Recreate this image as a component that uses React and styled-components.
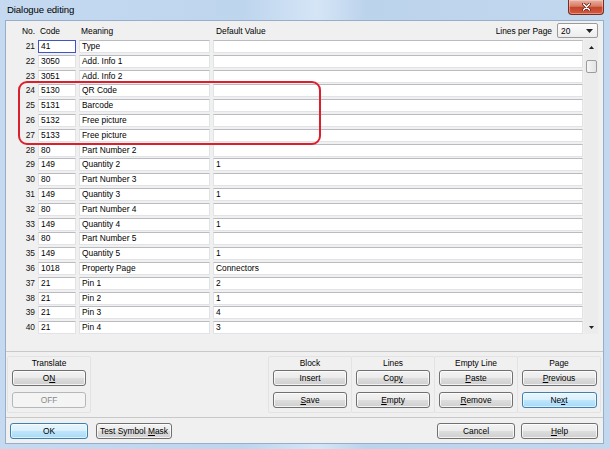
import React from "react";
import styled, { createGlobalStyle, css } from "styled-components";

const Global = createGlobalStyle`
  html, body { margin: 0; padding: 0; }
  body {
    width: 610px; height: 449px; overflow: hidden;
    background: #bcd4ee;
    font-family: "Liberation Sans", Arial, sans-serif;
  }
  * { box-sizing: border-box; }
`;

const Window = styled.div`
  width: 610px;
  height: 449px;
  display: flex;
  flex-direction: column;
  padding: 0 6px 5px 5px;
  background: linear-gradient(90deg, #c5daf1 0%, #bed5ee 40%, #d5e5f6 52%, #bcd3ec 60%, #c2d8ef 100%);
`;

const TitleBar = styled.div`
  height: 20px;
  display: flex;
  align-items: flex-start;
`;

const Title = styled.div`
  padding: 4px 0 0 2px;
  font-size: 9.6px;
  color: #000;
  letter-spacing: -0.1px;
`;

const CloseButton = styled.div`
  margin-left: auto;
  width: 36px;
  height: 15px;
  border: 1px solid #7a2a1e;
  border-top: none;
  border-radius: 0 0 4px 4px;
  background: linear-gradient(180deg, #eab1a3 0%, #d77a64 45%, #c5452b 52%, #d2593f 100%);
  display: flex;
  align-items: center;
  justify-content: center;
  box-shadow: inset 0 0 0 1px rgba(255, 220, 210, 0.45);
`;

const Client = styled.div`
  flex: 1;
  display: flex;
  flex-direction: column;
  background: #f0f0f0;
  border: 1px solid #97aecb;
  font-size: 8.4px;
  color: #000;
`;

const COLS = "29px 38px 131px 370px";

const Header = styled.div`
  height: 19px;
  display: flex;
  align-items: center;
`;

const HeaderCols = styled.div`
  flex: none;
  display: grid;
  grid-template-columns: 29px 38px 131px auto;
  column-gap: 3px;
  align-items: center;
`;

const HeaderLabel = styled.div`
  padding-left: ${(p) => (p.$right ? 0 : p.$pad || 2)}px;
  text-align: ${(p) => (p.$right ? "right" : "left")};
  white-space: nowrap;
`;

const PageControl = styled.div`
  margin-left: auto;
  margin-right: 5px;
  display: flex;
  align-items: center;
  gap: 5px;
  white-space: nowrap;
`;

const Combo = styled.div`
  width: 41px;
  height: 15px;
  border: 1px solid #9a9a9a;
  border-radius: 2px;
  background: linear-gradient(#fdfdfd, #ececec);
  display: flex;
  align-items: center;
  justify-content: space-between;
  padding: 0 4px 0 3px;
`;

const GridArea = styled.div`
  display: flex;
  height: 296px;
`;

const RowsWrap = styled.div`
  position: relative;
  width: 577px;
  display: flex;
  flex-direction: column;
`;

const Row = styled.div`
  height: 14.8px;
  display: grid;
  grid-template-columns: ${COLS};
  column-gap: 3px;
  align-items: start;
`;

const No = styled.div`
  height: 13px;
  line-height: 13px;
  text-align: right;
  color: #111;
`;

const Field = styled.div`
  height: 13px;
  line-height: 11px;
  background: #fff;
  border: 1px solid #e2e3e6;
  border-top-color: #b9bbc0;
  padding-left: 2px;
  white-space: nowrap;
  overflow: hidden;
  ${(p) =>
    p.$focused &&
    css`
      border-color: #3f55c4;
    `}
`;

const Annotation = styled.div`
  position: absolute;
  left: 12px;
  top: 41px;
  width: 303px;
  height: 64px;
  border: 2px solid #dc1f2c;
  border-radius: 9px;
  pointer-events: none;
`;

const ScrollBar = styled.div`
  margin-left: 1px;
  width: 14px;
  height: 294px;
  background: #ececec;
  display: flex;
  flex-direction: column;
  align-items: center;
`;

const ScrollArrow = styled.div`
  height: 14px;
  width: 14px;
  display: flex;
  align-items: center;
  justify-content: center;
  ${(p) => p.$bottom && css`margin-top: auto;`}
`;

const Thumb = styled.div`
  margin-top: 6px;
  width: 11px;
  height: 13px;
  border: 1px solid #9c9c9c;
  border-radius: 2px;
  background: linear-gradient(90deg, #f6f6f6, #e3e3e3);
`;

const Separator = styled.div`
  height: 1px;
  background: #c8c8c8;
  margin-top: ${(p) => p.$top || 0}px;
`;

const GroupsRow = styled.div`
  height: 65px;
  display: flex;
  align-items: flex-start;
  padding: 4px 2px 0 1px;
`;

const Group = styled.div`
  width: 84px;
  height: 57px;
  border: 1px solid #e3e3e3;
  border-radius: 2px;
  display: flex;
  flex-direction: column;
  align-items: center;
  & + & { margin-left: -1px; }
  ${(p) => p.$push && css`margin-left: auto !important;`}
`;

const GroupLabel = styled.div`
  height: 13px;
  line-height: 13px;
`;

const Buttons = styled.div`
  display: flex;
  flex-direction: column;
  gap: 6px;
  align-items: center;
`;

const Button = styled.button`
  font-family: "Liberation Sans", Arial, sans-serif;
  font-size: 8.4px;
  color: #000;
  width: ${(p) => p.$w || 74}px;
  height: 16px;
  padding: 0;
  border: 1px solid #707070;
  border-radius: 3px;
  background: linear-gradient(180deg, #f3f3f3 0%, #ebebeb 48%, #dddddd 52%, #cfcfcf 100%);
  box-shadow: inset 0 0 0 1px rgba(255, 255, 255, 0.75);
  line-height: 14px;
  u { text-decoration: underline; text-underline-offset: 1px; }
  ${(p) =>
    p.$primary &&
    css`
      border-color: #3c7fb1;
      background: linear-gradient(180deg, #eaf6fd 0%, #d9f0fc 48%, #bee6fd 52%, #a7d9f5 100%);
      box-shadow: inset 0 0 0 1px rgba(255, 255, 255, 0.6);
    `}
  &:disabled {
    border-color: #b5b8ba;
    background: #f4f4f4;
    color: #8a8a8a;
    box-shadow: none;
  }
`;

const BottomBar = styled.div`
  flex: 1;
  display: flex;
  align-items: flex-start;
  padding: 5px 5px 0 4px;
  gap: 8px;
`;

const RightButtons = styled.div`
  margin-left: auto;
  display: flex;
  gap: 6px;
`;

const Tri = ({ up, w = 5, h = 3 }) => (
  <svg width={w} height={h} viewBox={`0 0 ${w} ${h}`}>
    <polygon
      points={up ? `0,${h} ${w / 2},0 ${w},${h}` : `0,0 ${w},0 ${w / 2},${h}`}
      fill="#222"
    />
  </svg>
);

const rows = [
  [21, "41", "Type", ""],
  [22, "3050", "Add. Info 1", ""],
  [23, "3051", "Add. Info 2", ""],
  [24, "5130", "QR Code", ""],
  [25, "5131", "Barcode", ""],
  [26, "5132", "Free picture", ""],
  [27, "5133", "Free picture", ""],
  [28, "80", "Part Number 2", ""],
  [29, "149", "Quantity 2", "1"],
  [30, "80", "Part Number 3", ""],
  [31, "149", "Quantity 3", "1"],
  [32, "80", "Part Number 4", ""],
  [33, "149", "Quantity 4", "1"],
  [34, "80", "Part Number 5", ""],
  [35, "149", "Quantity 5", "1"],
  [36, "1018", "Property Page", "Connectors"],
  [37, "21", "Pin 1", "2"],
  [38, "21", "Pin 2", "1"],
  [39, "21", "Pin 3", "4"],
  [40, "21", "Pin 4", "3"],
];

const groups = [
  { label: "Block", a: <>Insert</>, b: <><u>S</u>ave</> },
  { label: "Lines", a: <>Cop<u>y</u></>, b: <><u>E</u>mpty</> },
  { label: "Empty Line", a: <><u>P</u>aste</>, b: <><u>R</u>emove</> },
  { label: "Page", a: <><u>P</u>revious</>, b: <>Ne<u>x</u>t</>, primary: true, w: 75 },
];

export default function App() {
  return (
    <>
      <Global />
      <Window>
        <TitleBar>
          <Title>Dialogue editing</Title>
          <CloseButton>
            <svg width="9" height="8" viewBox="0 0 9 8">
              <path d="M1.5 1 L7.5 7 M7.5 1 L1.5 7" stroke="#5a1a12" strokeWidth="3" strokeLinecap="round" />
              <path d="M1.5 1 L7.5 7 M7.5 1 L1.5 7" stroke="#fff" strokeWidth="1.6" strokeLinecap="round" />
            </svg>
          </CloseButton>
        </TitleBar>
        <Client>
          <Header>
            <HeaderCols>
              <HeaderLabel $right>No.</HeaderLabel>
              <HeaderLabel>Code</HeaderLabel>
              <HeaderLabel>Meaning</HeaderLabel>
              <HeaderLabel $pad={3}>Default Value</HeaderLabel>
            </HeaderCols>
            <PageControl>
              <span>Lines per Page</span>
              <Combo>
                <span>20</span>
                <Tri w={7} h={4} />
              </Combo>
            </PageControl>
          </Header>
          <GridArea>
            <RowsWrap>
              {rows.map(([n, code, meaning, def], i) => (
                <Row key={n}>
                  <No>{n}</No>
                  <Field $focused={i === 0}>{code}</Field>
                  <Field>{meaning}</Field>
                  <Field>{def}</Field>
                </Row>
              ))}
              <Annotation />
            </RowsWrap>
            <ScrollBar>
              <ScrollArrow>
                <Tri up w={5} h={3} />
              </ScrollArrow>
              <Thumb />
              <ScrollArrow $bottom>
                <Tri w={5} h={3} />
              </ScrollArrow>
            </ScrollBar>
          </GridArea>
          <Separator $top={15} />
          <GroupsRow>
            <Group>
              <GroupLabel>Translate</GroupLabel>
              <Buttons>
                <Button>O<u>N</u></Button>
                <Button disabled>OFF</Button>
              </Buttons>
            </Group>
            {groups.map((g, i) => (
              <Group key={g.label} $push={i === 0}>
                <GroupLabel>{g.label}</GroupLabel>
                <Buttons>
                  <Button $w={g.w}>{g.a}</Button>
                  <Button $w={g.w} $primary={g.primary}>{g.b}</Button>
                </Buttons>
              </Group>
            ))}
          </GroupsRow>
          <Separator />
          <BottomBar>
            <Button $primary $w={78}>OK</Button>
            <Button $w={76}>Test Symbol <u>M</u>ask</Button>
            <RightButtons>
              <Button $w={78}>Cancel</Button>
              <Button $w={77}><u>H</u>elp</Button>
            </RightButtons>
          </BottomBar>
        </Client>
      </Window>
    </>
  );
}
